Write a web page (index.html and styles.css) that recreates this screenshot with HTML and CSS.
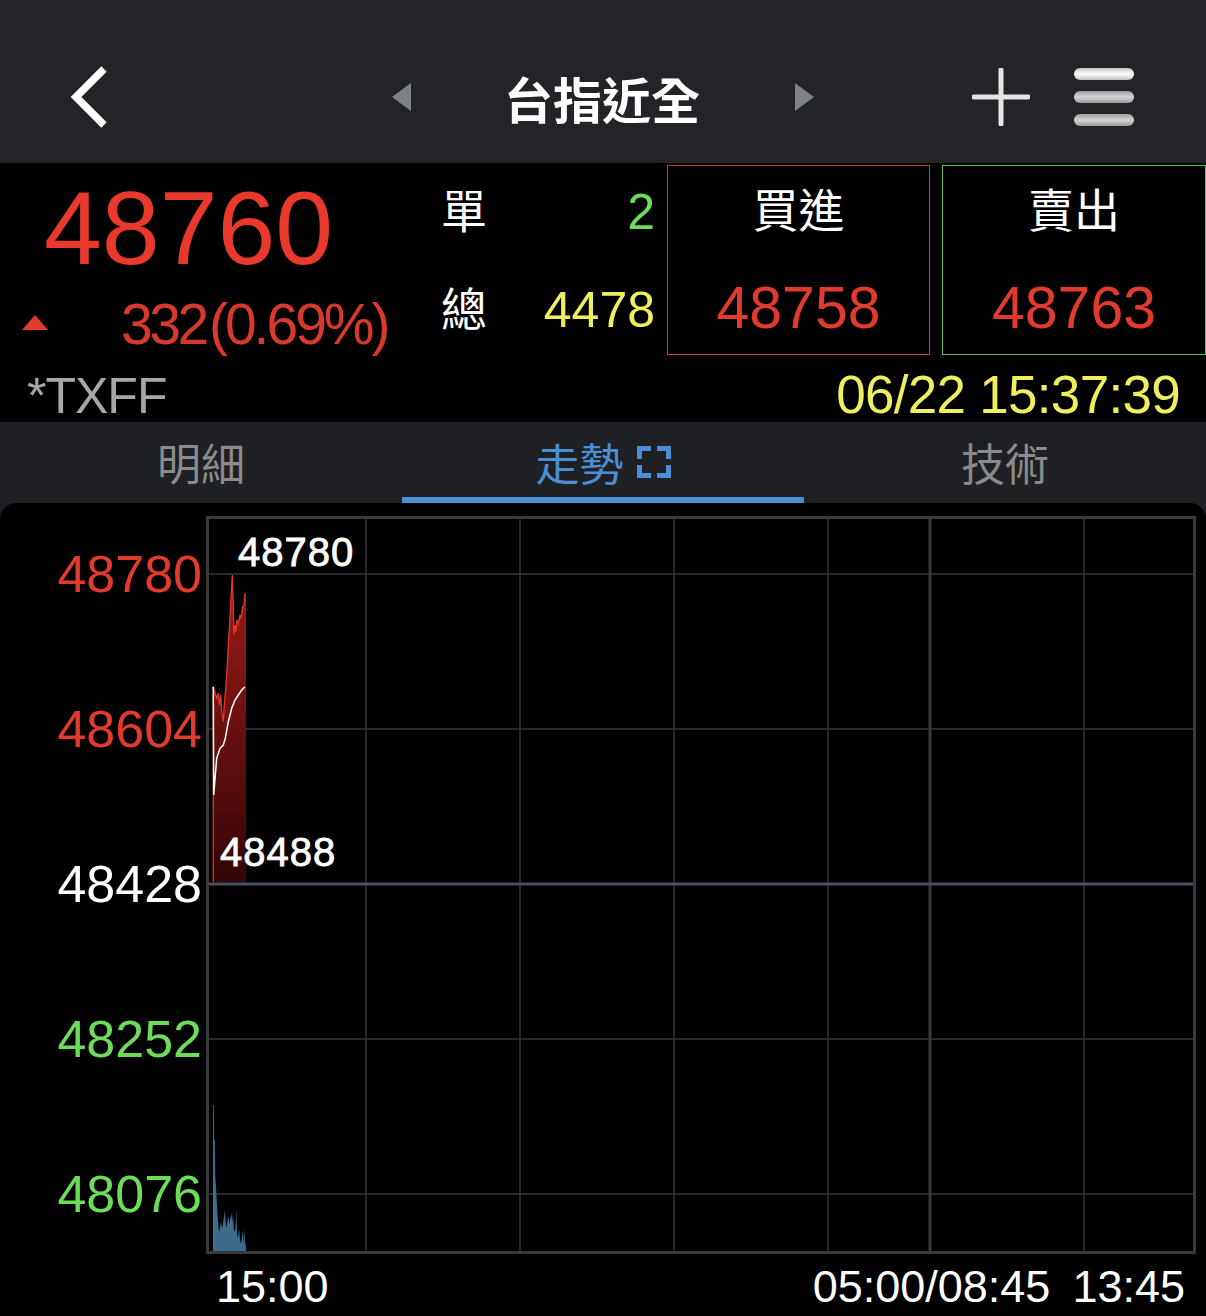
FILE: index.html
```html
<!DOCTYPE html>
<html lang="zh-Hant">
<head>
    <meta charset="UTF-8">
    <meta name="viewport" content="width=device-width, initial-scale=1.0">
    <title>台指近全</title>
    <link rel="stylesheet" href="styles.css">
</head>
<body>

    <header class="topbar">
        <a class="back">
            <svg width="40" height="62" viewBox="0 0 40 62">
                <path d="M36 3 L8 31 L36 59" fill="none" stroke="#fff" stroke-width="7.5"/>
            </svg>
        </a>
        <div class="title-switch">
            <span class="tri tri-left"></span>
            <h1>台指近全</h1>
            <span class="tri tri-right"></span>
        </div>
        <div class="actions">
            <svg width="58" height="58" viewBox="0 0 58 58">
                <path d="M29 2 V56 M2 29 H56" stroke="#e4e4e4" stroke-width="5" stroke-linecap="round"/>
            </svg>
            <div class="menu">
                <span class="bar bar-top"></span>
                <span class="bar"></span>
                <span class="bar"></span>
            </div>
        </div>
    </header>

    <section class="quote">
        <div class="quote-main">
            <div class="last">
                <div class="last-price">48760</div>
                <div class="change">
                    <span class="arrow"></span>
                    <span class="change-val">332<span class="pct">(0.69%)</span></span>
                </div>
            </div>
            <div class="volume">
                <span class="vol-label">單</span><span class="vol-val green">2</span>
                <span class="vol-label">總</span><span class="vol-val yellow">4478</span>
            </div>
            <div class="book bid">
                <div class="book-label">買進</div>
                <div class="book-price">48758</div>
            </div>
            <div class="book ask">
                <div class="book-label">賣出</div>
                <div class="book-price">48763</div>
            </div>
        </div>
        <div class="quote-meta">
            <span class="symbol">*TXFF</span>
            <span class="time">06/22 15:37:39</span>
        </div>
    </section>

    <nav class="tabs">
        <a class="tab">明細</a>
        <a class="tab active">走勢
            <svg width="34" height="32" viewBox="0 0 34 32">
                <path d="M2.5 13 V2.5 H14 M20 2.5 H31.5 V13 M31.5 19 V29.5 H20 M14 29.5 H2.5 V19" fill="none" stroke="#4a8fd6" stroke-width="5"/>
            </svg>
        </a>
        <a class="tab">技術</a>
    </nav>

    <section class="chart">
        <div class="chart-body">
            <div class="y-axis">
                <span class="red">48780</span>
                <span class="red">48604</span>
                <span>48428</span>
                <span class="green">48252</span>
                <span class="green">48076</span>
            </div>
            <svg class="plot" width="990" height="738" viewBox="0 0 990 738">
                <defs>
                    <linearGradient id="priceFill" x1="0" y1="0" x2="0" y2="1">
                        <stop offset="0" stop-color="#9c1b17"/>
                        <stop offset="1" stop-color="#340606"/>
                    </linearGradient>
                </defs>
                <g stroke="#343436" stroke-width="1.5">
                    <line x1="160" y1="0" x2="160" y2="738"/>
                    <line x1="314" y1="0" x2="314" y2="738"/>
                    <line x1="468" y1="0" x2="468" y2="738"/>
                    <line x1="622" y1="0" x2="622" y2="738"/>
                    <line x1="878" y1="0" x2="878" y2="738"/>
                    <line x1="0" y1="58" x2="990" y2="58"/>
                    <line x1="0" y1="213" x2="990" y2="213"/>
                    <line x1="0" y1="523" x2="990" y2="523"/>
                    <line x1="0" y1="678" x2="990" y2="678"/>
                </g>
                <line x1="724" y1="0" x2="724" y2="738" stroke="#39393b" stroke-width="3"/>
                <line x1="0" y1="368" x2="990" y2="368" stroke="#4a5062" stroke-width="3"/>
                <rect x="1.5" y="1.5" width="987" height="735" fill="none" stroke="#3a3a3c" stroke-width="3"/>

                <!-- price area -->
                <polygon fill="url(#priceFill)" points="7.3,366 7.3,170.7 10.7,182.3 12.3,177.3 13.3,189 14.7,179 15.7,195.7 17.3,205.7 18.3,189 20,169 21.3,149 22.7,122.3 24,102.3 25,82.3 26.3,59 27.3,89 28,119 29,109 30,115.7 31,104 32.3,107.3 34,99 35,102.3 36.7,90.7 38,89 39,77.3 40,77.3 40,366"/>
                <polyline fill="none" stroke="#e3362b" stroke-width="1.3" points="7.3,366 7.3,170.7 10.7,182.3 12.3,177.3 13.3,189 14.7,179 15.7,195.7 17.3,205.7 18.3,189 20,169 21.3,149 22.7,122.3 24,102.3 25,82.3 26.3,59 27.3,89 28,119 29,109 30,115.7 31,104 32.3,107.3 34,99 35,102.3 36.7,90.7 38,89 39,77.3"/>
                <polyline fill="none" stroke="#fff" stroke-width="1.5" points="7.3,170.7 7.7,279 10.7,242.3 14,232.3 17.3,229 19.3,222.3 22.3,205.7 25.7,192.3 29,184 32.3,179 35.7,174 39,170.7"/>

                <!-- volume -->
                <polygon fill="#3d6b8c" points="7,735 7,589 7.8,589 8.2,624 8.8,624 9.2,660 10,670 11,690 12,705 13,716 14,712 15,706 16,712 17,708 18,700 19,694 19.6,706 20.5,712 21.5,704 22.5,700 23.5,708 24.5,702 25.5,697 26.3,706 27,697 27.7,712 28.5,716 29.5,712 30.3,691 31,718 32,722 33,712 34,724 35,728 36,720 37,714 37.6,728 38.5,714 39,726 40,731 40,735"/>

                <text class="mark" x="32" y="50">48780</text>
                <text class="mark" x="14" y="350">48488</text>
            </svg>
        </div>
        <div class="x-axis">
            <span>15:00</span>
            <span class="x-right"><span>05:00/08:45</span><span>13:45</span></span>
        </div>
    </section>

</body>
</html>
```

FILE: styles.css
```css
body {
    margin: 0;
    width: 1206px;
    height: 1316px;
    overflow: hidden;
    background: #1f2023;
    color: #fff;
    font-family: "Liberation Sans", "Noto Sans CJK TC", sans-serif;
}

.red { color: #e23b2e; }
.green { color: #6ddc5a; }
.yellow { color: #efef5e; }

/* top bar */
.topbar {
    height: 163px;
    box-sizing: border-box;
    padding-top: 31px;
    background: #232427;
    display: grid;
    grid-template-columns: 1fr auto 1fr;
    align-items: center;
}

.back {
    padding-left: 68px;
    display: flex;
}

.title-switch {
    display: flex;
    align-items: center;
}

.title-switch h1 {
    margin: 0;
    font-size: 49px;
    font-weight: 700;
    line-height: 49px;
    font-family: "Noto Sans CJK TC", sans-serif;
}

.tri {
    width: 0;
    height: 0;
    border-top: 14px solid transparent;
    border-bottom: 14px solid transparent;
}

.tri-left {
    border-right: 19px solid #7f8286;
    margin-right: 93px;
}

.tri-right {
    border-left: 19px solid #7f8286;
    margin-left: 95px;
}

.actions {
    justify-self: end;
    padding-right: 72px;
    display: flex;
    align-items: center;
    gap: 44px;
}

.menu {
    display: flex;
    flex-direction: column;
    gap: 11px;
}

.bar {
    display: block;
    width: 60px;
    height: 12px;
    border-radius: 6px;
    background: linear-gradient(#9d9d9d, #d6d6d6 50%, #9a9a9a);
}

.bar-top {
    background: linear-gradient(#c4c4c4, #ffffff 50%, #c0c0c0);
}

/* quote */
.quote {
    background: #000;
    height: 259px;
}

.quote-main {
    display: flex;
    height: 192px;
    padding-top: 2px;
    box-sizing: border-box;
}

.last {
    width: 441px;
}

.last-price {
    font-size: 104px;
    line-height: 104px;
    color: #e8392c;
    padding: 11px 0 0 44px;
}

.change {
    display: flex;
    align-items: center;
    height: 60px;
    margin-top: 14px;
    padding-left: 22px;
}

.arrow {
    width: 0;
    height: 0;
    border-left: 13px solid transparent;
    border-right: 13px solid transparent;
    border-bottom: 15px solid #e23b2e;
    margin: 0 73px 4px 0;
}

.change-val {
    font-size: 57px;
    line-height: 60px;
    letter-spacing: -3.4px;
    color: #d8392d;
}

.pct {
    margin-left: 3px;
    letter-spacing: -3px;
}

.volume {
    width: 214px;
    margin-right: 12px;
    display: grid;
    grid-template-columns: auto 1fr;
    grid-auto-rows: 60px;
    row-gap: 38px;
    padding-top: 17px;
    align-content: start;
}

.vol-label {
    font-size: 46px;
    line-height: 60px;
}

.vol-val {
    font-size: 50px;
    line-height: 60px;
    text-align: right;
}

.book {
    width: 263px;
    border: 1px solid;
    box-sizing: border-box;
    display: flex;
    flex-direction: column;
    align-items: center;
}

.bid { border-color: #cf3b2f; }

.ask {
    width: 264px;
    margin-left: 12px;
    border-color: #5cc24e;
}

.book-label {
    font-size: 46px;
    line-height: 46px;
    margin-top: 22px;
}

.book-price {
    font-size: 59px;
    line-height: 60px;
    margin-top: 44px;
    color: #e23b2e;
}

.quote-meta {
    display: flex;
    justify-content: space-between;
    align-items: baseline;
    padding: 14px 26px 0 27px;
}

.symbol {
    font-size: 50px;
    line-height: 52px;
    letter-spacing: -1px;
    color: #a7a7a7;
}

.time {
    font-size: 53px;
    line-height: 52px;
    letter-spacing: -0.7px;
    color: #efef5e;
}

/* tabs */
.tabs {
    display: grid;
    grid-template-columns: repeat(3, 1fr);
    height: 81px;
}

.tab {
    display: flex;
    justify-content: center;
    align-items: center;
    gap: 13px;
    font-size: 44px;
    color: #8b8b8b;
    border-bottom: 6px solid transparent;
    padding-top: 5px;
    box-sizing: border-box;
}

.tab.active {
    color: #4a8fd6;
    border-bottom-color: #4a8fd6;
}

/* chart */
.chart {
    background: #000;
    border-radius: 16px 16px 0 0;
    height: 813px;
}

.chart-body {
    display: flex;
    padding-top: 13px;
}

.y-axis {
    width: 206px;
    box-sizing: border-box;
    padding: 38px 4px 0 0;
    display: flex;
    flex-direction: column;
    align-items: flex-end;
    gap: 115px;
}

.y-axis span {
    font-size: 52px;
    line-height: 40px;
    height: 40px;
}

.plot {
    display: block;
    flex: none;
}

.mark {
    font-family: "Liberation Sans", sans-serif;
    font-size: 40px;
    letter-spacing: 1px;
    fill: #fff;
    stroke: #fff;
    stroke-width: 0.8;
}

.x-axis {
    display: flex;
    justify-content: space-between;
    padding: 10px 21px 0 216px;
    font-size: 45px;
    line-height: 45px;
}

.x-right {
    display: flex;
    gap: 22px;
}
```
